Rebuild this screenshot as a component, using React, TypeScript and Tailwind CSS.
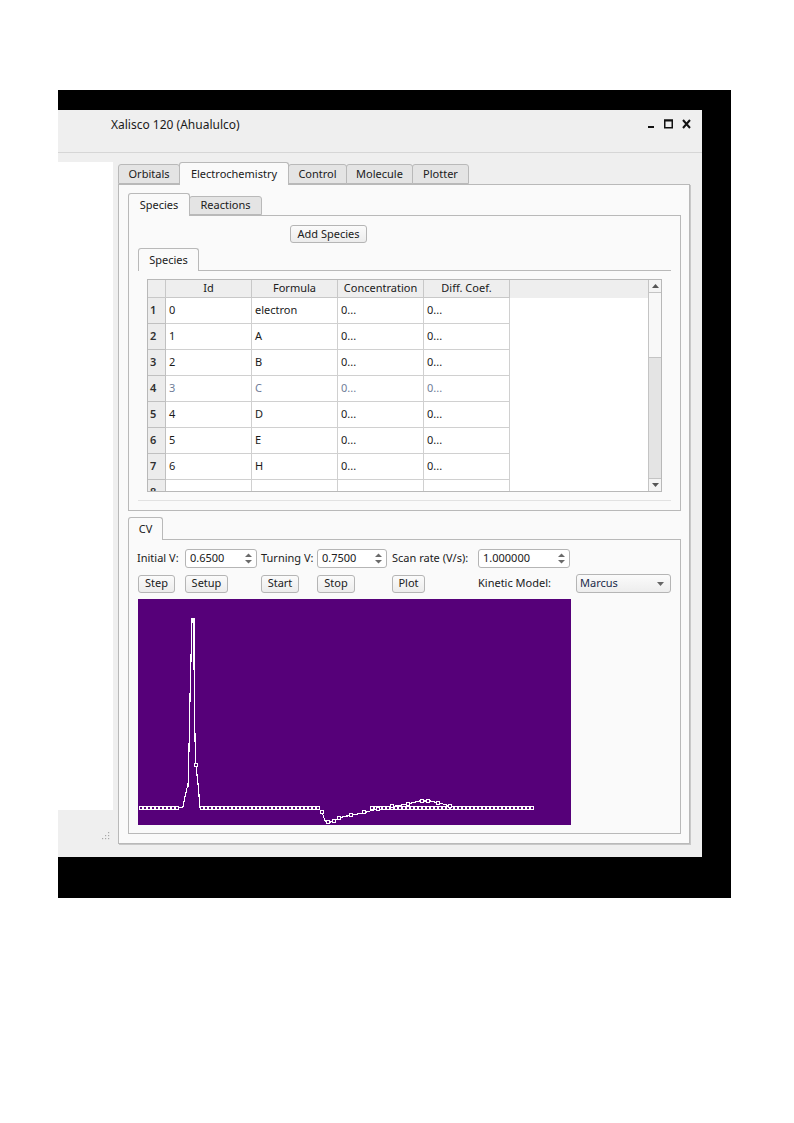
import React from "react";

const font = { fontFamily: '"Noto Sans", "DejaVu Sans", sans-serif' };

const rows = [
  { n: 1, id: "0", formula: "electron" },
  { n: 2, id: "1", formula: "A" },
  { n: 3, id: "2", formula: "B" },
  { n: 4, id: "3", formula: "C", faded: true },
  { n: 5, id: "4", formula: "D" },
  { n: 6, id: "5", formula: "E" },
  { n: 7, id: "6", formula: "H" },
];

function Tab({
  label,
  active,
  width,
  small,
}: {
  label: string;
  active?: boolean;
  width: number;
  small?: boolean;
}) {
  const h = active ? (small ? "h-[21px]" : "h-[22px]") : small ? "h-[19px]" : "h-[20px]";
  return (
    <div
      style={{ width }}
      className={`${h} flex items-center justify-center border border-[#b9b9b9] rounded-t-[3px] -ml-px first:ml-0 text-[11px] text-[#202020] ${
        active ? "bg-[#fafafa] border-b-0 relative z-10 -mb-px h-[23px]" : "bg-[#e4e4e4]"
      }`}
    >
      {label}
    </div>
  );
}

function Button({ label, width, className = "" }: { label: string; width: number; className?: string }) {
  return (
    <div
      style={{ width }}
      className={`h-[18px] flex items-center justify-center rounded-[3px] border border-[#b5b5b5] bg-gradient-to-b from-[#fbfbfb] to-[#ececec] text-[11px] text-[#202020] ${className}`}
    >
      {label}
    </div>
  );
}

function SpinBox({ value, width, className = "" }: { value: string; width: number; className?: string }) {
  return (
    <div
      style={{ width }}
      className={`h-[19px] flex items-center rounded-[3px] border border-[#b5b5b5] bg-white text-[11px] text-[#202020] ${className}`}
    >
      <span className="flex-1 pl-[4px]">{value}</span>
      <svg width="11" height="13" viewBox="0 0 11 13" className="mr-[2px]">
        <path d="M2 5 L5.5 1.5 L9 5 Z" fill="#6a6a6a" />
        <path d="M2 8 L5.5 11.5 L9 8 Z" fill="#6a6a6a" />
      </svg>
    </div>
  );
}

function Plot() {
  const curve = [
    [3, 209], [41, 209], [45, 208], [47, 198], [49, 189], [50, 188], [51, 150], [52, 98],
    [53, 60], [54, 20], [56, 20], [56, 60], [56.5, 107], [57, 140], [58, 166], [60, 185],
    [62, 208], [180, 209], [184, 213], [187, 222], [192, 223], [197, 222], [200, 219],
    [209, 217], [225, 214], [239, 210], [252, 208], [269, 205], [282, 202], [292, 202],
    [305, 205], [315, 208], [330, 209], [394, 209],
  ];
  const markers: number[][] = [];
  for (let x = 3; x <= 41; x += 4) markers.push([x, 209]);
  for (let x = 64; x <= 180; x += 4) markers.push([x, 209]);
  for (let x = 234; x <= 394; x += 4) markers.push([x, 209]);
  [
    [58, 166], [184, 213], [190, 223], [196, 222], [201, 219], [213, 216], [226, 213],
    [240, 210], [254, 207], [270, 205], [284, 202], [290, 202], [300, 204], [312, 207],
  ].forEach((m) => markers.push(m));

  return (
    <div className="w-[433px] h-[226px] bg-[#560079] mt-[6px] ml-[9px]">
      <svg width="433" height="226" viewBox="0 0 433 226" shapeRendering="crispEdges">
        <polyline
          points={curve.map((p) => p.join(",")).join(" ")}
          fill="none"
          stroke="#ffffff"
          strokeWidth="1.2"
        />
        {markers.map(([x, y], i) => (
          <rect key={i} x={x - 1.5} y={y - 1.5} width="3" height="3" fill="#560079" stroke="#ffffff" strokeWidth="1" />
        ))}
      </svg>
    </div>
  );
}

function SpeciesTable() {
  const cols = ["Id", "Formula", "Concentration", "Diff. Coef."];
  return (
    <div className="ml-[9px] mt-[8px] w-[515px] h-[213px] border border-[#b8b8b8] bg-white flex overflow-hidden">
      <div className="flex-1 flex flex-col overflow-hidden">
        <div className="h-[18px] flex bg-[#eeeeee] shrink-0">
          <div className="w-[18px] border-r border-b border-[#c8c8c8]" />
          {cols.map((c) => (
            <div
              key={c}
              className="w-[86px] flex items-center justify-center border-r border-b border-[#c8c8c8] text-[11px] text-[#202020]"
            >
              {c}
            </div>
          ))}
        </div>
        {[...rows, { n: 8, id: "", formula: "" }].map((r) => (
          <div key={r.n} className="h-[26px] flex shrink-0 text-[11px]">
            <div className="w-[18px] flex items-center pl-[2px] bg-[#ececec] border-r border-b border-[#c0c0c0] font-semibold text-[#303030]">
              {r.n}
            </div>
            {[r.id, r.formula, r.n === 8 ? "" : "0...", r.n === 8 ? "" : "0..."].map((v, i) => (
              <div
                key={i}
                className={`w-[86px] flex items-center pl-[3px] border-r border-b border-[#d0d0d0] ${
                  "faded" in r && r.faded ? "text-[#6f7d98]" : "text-[#1a1a1a]"
                }`}
              >
                {v}
              </div>
            ))}
          </div>
        ))}
      </div>
      <div className="w-[13px] border-l border-[#c4c4c4] flex flex-col bg-[#e4e4e4]">
        <div className="h-[13px] bg-[#f4f4f4] border-b border-[#c4c4c4] flex items-center justify-center">
          <svg width="7" height="4" viewBox="0 0 7 4">
            <path d="M0 4 L3.5 0 L7 4 Z" fill="#555" />
          </svg>
        </div>
        <div className="h-[65px] bg-[#f8f8f8] border-b border-[#c4c4c4]" />
        <div className="flex-1" />
        <div className="h-[13px] bg-[#f4f4f4] border-t border-[#c4c4c4] flex items-center justify-center">
          <svg width="7" height="4" viewBox="0 0 7 4">
            <path d="M0 0 L3.5 4 L7 0 Z" fill="#555" />
          </svg>
        </div>
      </div>
    </div>
  );
}

export default function App() {
  return (
    <div className="w-[794px] h-[1123px] bg-white pt-[90px] pl-[58px]" style={font}>
      <div className="w-[673px] h-[808px] bg-black pt-[20px]">
        <div className="w-[644px] h-[747px] bg-[#efefef] flex flex-col">
          {/* title bar */}
          <div className="h-[43px] border-b border-[#d6d6d6] flex items-start pt-[6px] pl-[53px] pr-[11px] shrink-0">
            <span className="flex-1 text-[12px] text-[#1a1a1a]">Xalisco 120 (Ahualulco)</span>
            <div className="flex items-center gap-[9px] mt-[3px]">
              <svg width="8" height="10" viewBox="0 0 8 10">
                <rect x="1" y="7" width="6" height="2" fill="#111" />
              </svg>
              <svg width="9" height="10" viewBox="0 0 9 10">
                <rect x="0.75" y="1.25" width="7.5" height="7.5" fill="none" stroke="#111" strokeWidth="1.5" />
                <rect x="0" y="0.5" width="9" height="2" fill="#111" />
              </svg>
              <svg width="9" height="10" viewBox="0 0 9 10">
                <path d="M1 1 L8 9 M8 1 L1 9" stroke="#111" strokeWidth="2" />
              </svg>
            </div>
          </div>

          <div className="flex flex-1">
            {/* left panel */}
            <div className="w-[55px] flex flex-col">
              <div className="mt-[9px] h-[648px] bg-white" />
              <div className="flex justify-end pr-[2px] mt-[22px]">
                <svg width="9" height="9" viewBox="0 0 9 9">
                  <rect x="6" y="0" width="1.2" height="1.2" fill="#a8a8a8" />
                  <rect x="6" y="3" width="1.2" height="1.2" fill="#a8a8a8" />
                  <rect x="3" y="3" width="1.2" height="1.2" fill="#a8a8a8" />
                  <rect x="6" y="6" width="1.2" height="1.2" fill="#a8a8a8" />
                  <rect x="3" y="6" width="1.2" height="1.2" fill="#a8a8a8" />
                  <rect x="0" y="6" width="1.2" height="1.2" fill="#a8a8a8" />
                </svg>
              </div>
            </div>

            {/* main tab widget */}
            <div className="ml-[5px] mt-[9px] w-[572px] flex flex-col">
              <div className="flex items-end h-[22px]">
                <Tab label="Orbitals" width={62} />
                <Tab label="Electrochemistry" width={110} active />
                <Tab label="Control" width={59} />
                <Tab label="Molecule" width={67} />
                <Tab label="Plotter" width={57} />
              </div>
              <div className="h-[660px] border border-[#b9b9b9] bg-[#fafafa] pl-[9px] pt-[10px] shadow-[1px_1px_0_#c8c8c8]">
                {/* species / reactions */}
                <div className="flex items-end h-[20px]">
                  <Tab label="Species" width={62} active small />
                  <Tab label="Reactions" width={73} small />
                </div>
                <div className="w-[553px] h-[296px] border border-[#b9b9b9] bg-[#fafafa] flex flex-col">
                  <Button label="Add Species" width={77} className="ml-[161px] mt-[9px]" />
                  <div className="ml-[9px] mt-[6px] flex items-end h-[21px]">
                    <Tab label="Species" width={61} active small />
                  </div>
                  <div className="ml-[9px] w-[533px] h-[231px] border-t border-b border-t-[#b9b9b9] border-b-[#e2e2e2]">
                    <SpeciesTable />
                  </div>
                </div>

                {/* CV */}
                <div className="flex items-end h-[22px] mt-[6px]">
                  <Tab label="CV" width={35} active small />
                </div>
                <div className="w-[553px] h-[295px] border border-[#b9b9b9] bg-[#fafafa] flex flex-col pt-[9px] text-[11px] text-[#202020]">
                  <div className="flex items-center h-[19px]">
                    <span className="ml-[8px] w-[48px]">Initial V:</span>
                    <SpinBox value="0.6500" width={72} />
                    <span className="ml-[4px] w-[56px]">Turning V:</span>
                    <SpinBox value="0.7500" width={70} />
                    <span className="ml-[5px] w-[86px]">Scan rate (V/s):</span>
                    <SpinBox value="1.000000" width={92} />
                  </div>
                  <div className="flex items-center h-[19px] mt-[6px]">
                    <Button label="Step" width={37} className="ml-[9px]" />
                    <Button label="Setup" width={43} className="ml-[10px]" />
                    <Button label="Start" width={38} className="ml-[33px]" />
                    <Button label="Stop" width={38} className="ml-[18px]" />
                    <Button label="Plot" width={33} className="ml-[37px]" />
                    <span className="ml-[53px] w-[98px]">Kinetic Model:</span>
                    <div className="w-[95px] h-[19px] flex items-center rounded-[3px] border border-[#b5b5b5] bg-gradient-to-b from-[#fbfbfb] to-[#ededed]">
                      <span className="flex-1 pl-[3px] text-[#1a2a4a]">Marcus</span>
                      <svg width="7" height="4" viewBox="0 0 7 4" className="mr-[6px]">
                        <path d="M0 0 L3.5 4 L7 0 Z" fill="#666" />
                      </svg>
                    </div>
                  </div>
                  <Plot />
                </div>
              </div>
            </div>
          </div>
        </div>
      </div>
    </div>
  );
}
